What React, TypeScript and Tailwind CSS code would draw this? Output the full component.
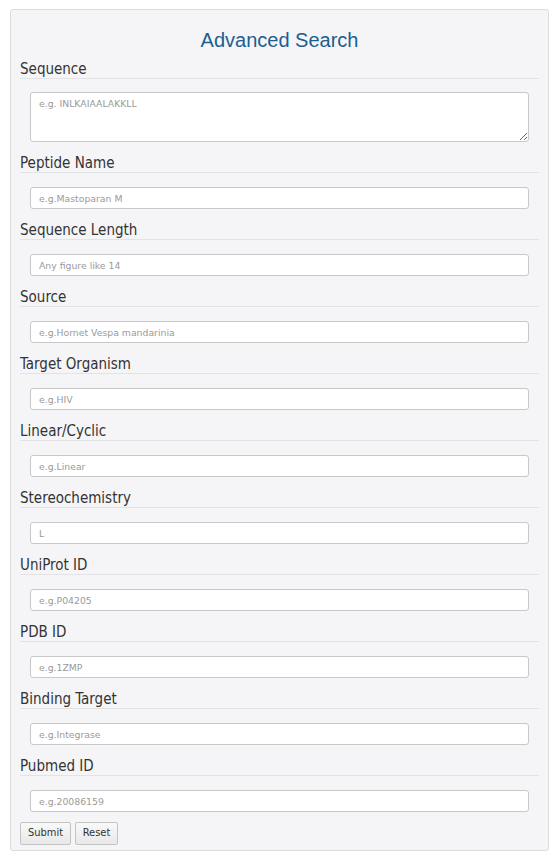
const fields = [
  { label: 'Peptide Name', placeholder: 'e.g.Mastoparan M' },
  { label: 'Sequence Length', placeholder: 'Any figure like 14' },
  { label: 'Source', placeholder: 'e.g.Hornet Vespa mandarinia' },
  { label: 'Target Organism', placeholder: 'e.g.HIV' },
  { label: 'Linear/Cyclic', placeholder: 'e.g.Linear' },
  { label: 'Stereochemistry', placeholder: 'L' },
  { label: 'UniProt ID', placeholder: 'e.g.P04205' },
  { label: 'PDB ID', placeholder: 'e.g.1ZMP' },
  { label: 'Binding Target', placeholder: 'e.g.Integrase' },
  { label: 'Pubmed ID', placeholder: 'e.g.20086159' },
];

const font = "font-['Tahoma','DejaVu_Sans_Condensed','DejaVu_Sans',sans-serif]";
const fieldFont = "font-['Verdana','DejaVu_Sans',sans-serif]";

function Label({ children }: { children: React.ReactNode }) {
  return (
    <div className="h-[21px] border-b border-[#e3e3e5] pt-[1px] text-[15px] leading-[20px] text-[#333]">
      {children}
    </div>
  );
}

export default function App() {
  return (
    <div className={`min-h-[858px] bg-white pt-[9px] pl-[10px] ${font}`}>
      <form className="w-[539px] rounded-[3px] border border-[#dcdcde] bg-[#f5f5f7] px-[9px] pt-[16px] pb-[5px]">
        <h2 className="mb-[4px] text-center font-['Liberation_Sans',Arial,sans-serif] text-[20px] leading-[28px] text-[#1c5f8f]">
          Advanced Search
        </h2>

        <Label>Sequence</Label>
        <div className="pt-[13px] pr-[10px] pb-[10px] pl-[10px]">
          <textarea
            placeholder="e.g. INLKAIAALAKKLL"
            className={`block h-[50px] w-full rounded-[3px] border border-[#c8c8c8] bg-white px-[8px] py-[4px] text-[9.3px] leading-[14px] text-[#333] placeholder:text-[#9a9a9a] outline-none ${fieldFont}`}
          />
        </div>

        {fields.map((f) => (
          <div key={f.label}>
            <Label>{f.label}</Label>
            <div className="pt-[14px] pr-[10px] pb-[10px] pl-[10px]">
              <input
                type="text"
                placeholder={f.placeholder}
                className={`block h-[22px] w-full rounded-[3px] border border-[#c8c8c8] bg-white px-[8px] text-[9.3px] text-[#333] placeholder:text-[#9a9a9a] outline-none ${fieldFont}`}
              />
            </div>
          </div>
        ))}

        <div className="flex gap-[4px]">
          <button
            type="button"
            className="h-[23px] w-[51px] rounded-[2px] border border-[#c4c4c4] bg-gradient-to-b from-[#f9f9f9] to-[#e8e8e8] text-[11px] text-[#333]"
          >
            Submit
          </button>
          <button
            type="button"
            className="h-[23px] w-[43px] rounded-[2px] border border-[#c4c4c4] bg-gradient-to-b from-[#f9f9f9] to-[#e8e8e8] text-[11px] text-[#333]"
          >
            Reset
          </button>
        </div>
      </form>
    </div>
  );
}
